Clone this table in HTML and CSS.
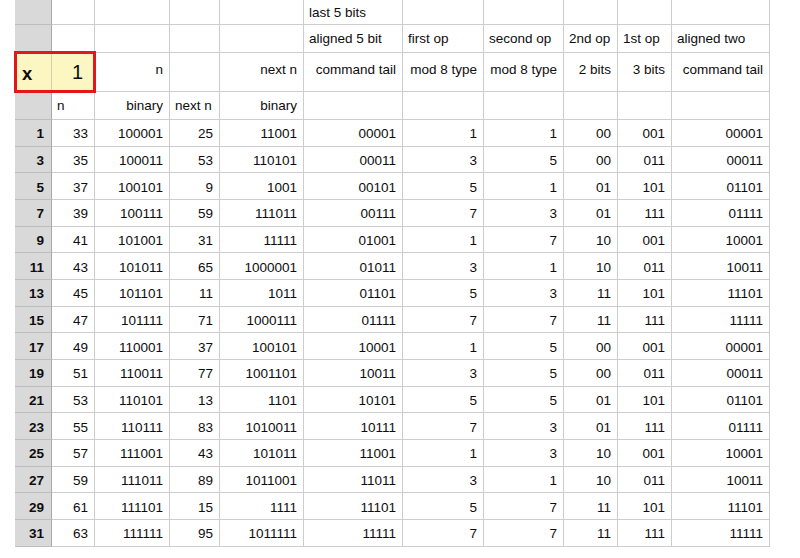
FILE: index.html
```html
<!DOCTYPE html>
<html>
<head>
<meta charset="utf-8">
<link rel="stylesheet" href="styles.css">
</head>
<body>
<div class="sheet" id="sheet">
  <div class="c h"></div><div class="c"></div><div class="c"></div><div class="c"></div><div class="c"></div><div class="c l">last 5 bits</div><div class="c"></div><div class="c"></div><div class="c"></div><div class="c"></div><div class="c"></div>
  <div class="c h"></div><div class="c"></div><div class="c"></div><div class="c"></div><div class="c"></div><div class="c l">aligned 5 bit</div><div class="c l">first op</div><div class="c l">second op</div><div class="c l">2nd op</div><div class="c l">1st op</div><div class="c l">aligned two</div>
  <div class="c h sel l"><span class="xlabel">x</span><div class="selbox"></div></div><div class="c sel"><span class="xval">1</span></div><div class="c up">n</div><div class="c"></div><div class="c up">next n</div><div class="c up">command tail</div><div class="c up">mod 8 type</div><div class="c up">mod 8 type</div><div class="c up">2 bits</div><div class="c up">3 bits</div><div class="c up">command tail</div>
  <div class="c h"></div><div class="c l">n</div><div class="c">binary</div><div class="c l">next n</div><div class="c">binary</div><div class="c"></div><div class="c"></div><div class="c"></div><div class="c"></div><div class="c"></div><div class="c"></div>
</div>
<script>
var rows = [
[1,33,"100001",25,"11001","00001",1,1,"00","001","00001"],
[3,35,"100011",53,"110101","00011",3,5,"00","011","00011"],
[5,37,"100101",9,"1001","00101",5,1,"01","101","01101"],
[7,39,"100111",59,"111011","00111",7,3,"01","111","01111"],
[9,41,"101001",31,"11111","01001",1,7,"10","001","10001"],
[11,43,"101011",65,"1000001","01011",3,1,"10","011","10011"],
[13,45,"101101",11,"1011","01101",5,3,"11","101","11101"],
[15,47,"101111",71,"1000111","01111",7,7,"11","111","11111"],
[17,49,"110001",37,"100101","10001",1,5,"00","001","00001"],
[19,51,"110011",77,"1001101","10011",3,5,"00","011","00011"],
[21,53,"110101",13,"1101","10101",5,5,"01","101","01101"],
[23,55,"110111",83,"1010011","10111",7,3,"01","111","01111"],
[25,57,"111001",43,"101011","11001",1,3,"10","001","10001"],
[27,59,"111011",89,"1011001","11011",3,1,"10","011","10011"],
[29,61,"111101",15,"1111","11101",5,7,"11","101","11101"],
[31,63,"111111",95,"1011111","11111",7,7,"11","111","11111"]
];
var sheet = document.getElementById("sheet");
rows.forEach(function (r) {
  r.forEach(function (v, i) {
    var d = document.createElement("div");
    d.className = i === 0 ? "c d h rh" : "c d";
    d.textContent = v;
    sheet.appendChild(d);
  });
});
</script>
</body>
</html>
```

FILE: styles.css
```css
html, body {
  margin: 0;
  padding: 0;
  background: #fff;
}
body {
  font-family: "Liberation Sans", Arial, sans-serif;
  font-size: 13.5px;
  color: #0d0d0d;
}
.sheet {
  display: grid;
  margin-left: 15px;
  width: 755px;
  grid-template-columns: 37px 43px 75px 50px 84px 99px 81px 80px 54px 54px 98px;
  grid-template-rows: 25px 28px 39px 28px repeat(16, 26.67px);
}
.c {
  box-sizing: border-box;
  border-right: 1px solid #cdcdcd;
  border-bottom: 1px solid #cdcdcd;
  display: flex;
  align-items: center;
  justify-content: flex-end;
  padding: 0 6px 0 5px;
  white-space: nowrap;
  background: #fff;
}
.c.l {
  justify-content: flex-start;
}
.c.up {
  padding-bottom: 6px;
}
.c.d {
  padding-top: 2px;
}
.c.h {
  background: #d9d9d9;
  border-right-color: #a8a8a8;
  border-bottom-color: #bdbdbd;
}
.c.rh {
  font-weight: bold;
  padding-right: 7px;
}
.c.sel {
  background: #fcf6c2;
}
.c.h.sel {
  position: relative;
  border-right-color: #d6d0a8;
  padding-left: 7px;
}
.xlabel {
  font-weight: bold;
  font-size: 18.5px;
  padding-top: 3px;
}
.xval {
  font-size: 20px;
  padding-right: 5px;
  padding-top: 1px;
}
.selbox {
  position: absolute;
  left: -1px;
  top: -2px;
  width: 82px;
  height: 42px;
  border: 3px solid #e2161b;
  box-sizing: border-box;
  z-index: 1;
}
```
